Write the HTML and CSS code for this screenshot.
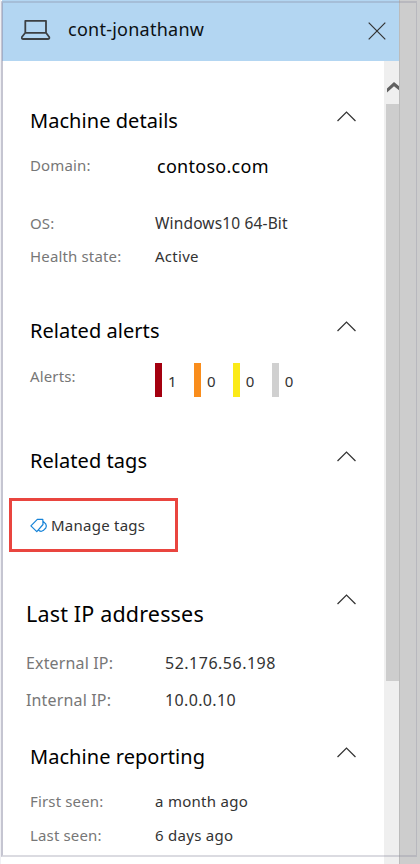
FILE: index.html
```
<!DOCTYPE html>
<html lang="en">
<head>
<meta charset="utf-8">
<title>Machine details</title>
<link rel="stylesheet" href="styles.css">
</head>
<body>
<div class="window">
  <div class="panel">
    <header class="header">
      <svg class="laptop" width="30" height="22" viewBox="0 0 30 22" fill="none" stroke="#3c4043" stroke-width="1.8" stroke-linejoin="round"><path d="M4.3 1.8H25V13.8H4.3ZM4.3 13.8L.9 18Q.4 20 2.2 20H26.8Q28.8 20 28.2 18L25 13.8"/></svg>
      <span class="title">cont-jonathanw</span>
      <svg class="close" width="18" height="18" viewBox="0 0 18 18" fill="none" stroke="#333" stroke-width="1.2"><path d="M.7.7L17.3 17.3M17.3.7L.7 17.3"/></svg>
    </header>
    <div class="body">
      <main class="content">
        <section class="details">
          <div class="head"><h2>Machine details</h2><svg class="chev" viewBox="0 0 18 10"><path d="M.5 9.3L9 .9L17.5 9.3"/></svg></div>
          <div class="row domain"><span class="label">Domain:</span><span class="value v-domain">contoso.com</span></div>
          <div class="row os"><span class="label">OS:</span><span class="value v-os">Windows10 64-Bit</span></div>
          <div class="row"><span class="label">Health state:</span><span class="value v-active">Active</span></div>
        </section>
        <section class="alerts">
          <div class="head"><h2>Related alerts</h2><svg class="chev" viewBox="0 0 18 10"><path d="M.5 9.3L9 .9L17.5 9.3"/></svg></div>
          <div class="row counts"><span class="label">Alerts:</span>
            <div class="bars"><span class="count high">1</span><span class="count medium">0</span><span class="count low">0</span><span class="count info">0</span></div>
          </div>
        </section>
        <section class="tags">
          <div class="head"><h2>Related tags</h2><svg class="chev" viewBox="0 0 18 10"><path d="M.5 9.3L9 .9L17.5 9.3"/></svg></div>
          <div class="manage">
            <svg width="18" height="15" viewBox="0 0 18 15" fill="none" stroke="#1683d8" stroke-width="1.2" stroke-linejoin="round"><path d="M.9 7.8L7.3 1.4L12.8 1.3L13 6.5L6.8 13.7ZM12.9 3.2L15.7 5.9Q16.9 8 15.8 10L13.2 12.6Q11.3 13.8 9.4 12.9L8.5 12"/></svg>
            <span class="v-manage">Manage tags</span>
          </div>
        </section>
        <section class="ips">
          <div class="head"><h2>Last IP addresses</h2><svg class="chev" viewBox="0 0 18 10"><path d="M.5 9.3L9 .9L17.5 9.3"/></svg></div>
          <div class="row"><span class="label">External IP:</span><span class="value v-ext">52.176.56.198</span></div>
          <div class="row"><span class="label">Internal IP:</span><span class="value v-int">10.0.0.10</span></div>
        </section>
        <section class="reporting">
          <div class="head"><h2>Machine reporting</h2><svg class="chev" viewBox="0 0 18 10"><path d="M.5 9.3L9 .9L17.5 9.3"/></svg></div>
          <div class="row"><span class="label">First seen:</span><span class="value">a month ago</span></div>
          <div class="row"><span class="label">Last seen:</span><span class="value">6 days ago</span></div>
        </section>
      </main>
      <aside class="scrollbar">
        <svg class="up" width="13" height="11" viewBox="0 0 13 11"><path d="M0 10.5V6.5L7 0L13 5V9L7 4.2Z" fill="#606060"/></svg>
        <div class="thumb"></div>
      </aside>
    </div>
  </div>
  <div class="gutter"></div>
  <div class="outline"></div>
</div>
</body>
</html>
```

FILE: styles.css
```
* { box-sizing: border-box; }
body { margin: 0; background: #fff; font-family: "Noto Sans", sans-serif; font-size: 15px; color: #333; }
.window { position: relative; display: flex; width: 420px; height: 864px; overflow: hidden; }
.panel { width: 399px; display: flex; flex-direction: column; border-left: 1px solid #f0f0f4; }
.gutter { width: 21px; background: #cdcdcd; border-left: 1px solid #bbb; }
.outline { position: absolute; left: 1px; top: 1px; width: 416px; height: 856px; border: 2px solid rgba(135, 135, 155, .3); border-left-color: rgba(140, 140, 165, .5); border-right-width: 1px; }
.header { height: 61px; margin-left: 1px; background: #b3d6f2; display: flex; align-items: center; padding: 0 13px 0 19px; }
.laptop { flex: none; margin-top: -1px; }
.title { margin-left: 17px; font-size: 18px; letter-spacing: .25px; color: #0c1114; white-space: nowrap; margin-top: -3px; }
.close { margin-left: auto; }
.body { flex: 1; display: flex; margin-left: -1px; }
.content { flex: 1; padding-top: 44px; }
.scrollbar { width: 15px; background: #efefef; padding-top: 21px; display: flex; flex-direction: column; }
.up { margin-left: 3px; flex: none; }
.thumb { margin: 11px 0 0 2px; height: 577px; background: #cdcdcd; }
section { padding-left: 30px; }
.head { display: flex; justify-content: space-between; height: 30px; padding-right: 28px; }
h2 { margin: 1px 0 0; font-size: 20px; letter-spacing: .05px; line-height: 30px; font-weight: 400; color: #000; white-space: nowrap; }
.chev { width: 19px; height: 11px; margin-top: 6px; fill: none; stroke: #333; stroke-width: 1.2; }
.row { display: grid; grid-template-columns: 125px 1fr; height: 24px; line-height: 24px; white-space: nowrap; }
.row > span, .v-manage { justify-self: start; }
.label { color: #777; letter-spacing: .15px; }
.value { letter-spacing: .28px; }
.details { height: 210px; }
.domain { margin-top: 18px; }
.v-domain { font-size: 18px; line-height: 26px; letter-spacing: .28px; color: #000; margin-left: 2px; }
.os { margin-top: 34px; margin-bottom: 9px; }
.v-os { font-size: 15.5px; letter-spacing: .15px; }
.alerts { height: 130px; }
.counts { margin-top: 19px; }
.bars { display: flex; height: 34px; margin-top: -1px; }
.count { width: 38.9px; padding-left: 6px; line-height: 36px; border-left: 7px solid; font-size: 15px; }
.high { border-left-color: #a4000f; }
.medium { border-left-color: #f98d1c; }
.low { border-left-color: #fbea18; }
.info { border-left-color: #d0d0d0; }
.high, .medium, .low, .info { color: #333; }
.high { border-left-color: #a4000f; }
.medium { border-left-color: #f98d1c; }
.low { border-left-color: #fbea18; }
.info { border-left-color: #d0d0d0; }
.tags { height: 153px; padding-left: 9px; }
.tags .head { padding-left: 21px; }
.manage { display: flex; align-items: center; width: 169px; height: 54px; margin-top: 23px; padding-left: 18px; border: 3px solid #e9453f; }
.v-manage { margin-left: 3px; line-height: 24px; letter-spacing: .25px; white-space: nowrap; }
.ips { height: 143px; padding-left: 26px; }
.ips h2 { font-size: 21.5px; letter-spacing: .17px; }
.ips .chev { margin-top: -4px; }
.ips .row { grid-template-columns: 139px 1fr; margin-top: 23px; font-size: 16px; }
.ips .row + .row { margin-top: 13px; }
.ips .v-ext { letter-spacing: .5px; }
.ips .v-int { letter-spacing: .35px; }
.reporting .row { margin-top: 18px; }
.reporting .row + .row { margin-top: 10px; }
```
